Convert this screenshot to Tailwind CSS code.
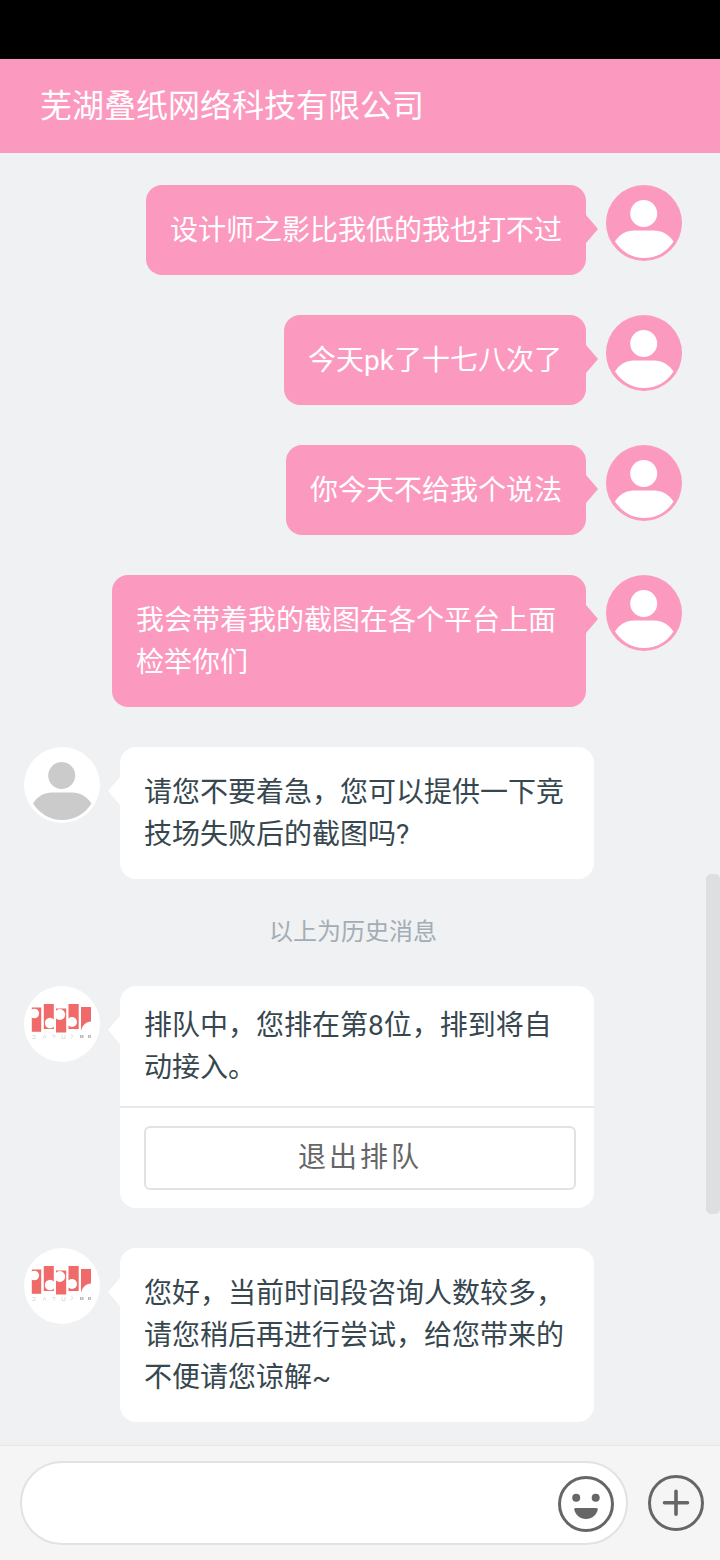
<!DOCTYPE html>
<html lang="zh-CN">
<head>
<meta charset="utf-8">
<title>芜湖叠纸网络科技有限公司</title>
<script src="https://cdn.jsdelivr.net/npm/@tailwindcss/browser@4"></script>
</head>
<body class="bg-[#eff1f3]">
<svg class="hidden">
  <symbol id="person" viewBox="0 0 76 76">
    <circle cx="37.700" cy="28.500" r="13.500"/>
    <path d="M9 56.500C14 49 20 45.500 28 45.500H48C56 45.500 62 49 67.500 56.500C60 68 50 73 38 73C26 73 16 67 9 56.500Z"/>
  </symbol>
  <symbol id="logo" viewBox="0 0 76 76">
    <g fill="#f06a6a">
      <rect x="7.800" y="21.500" width="9.400" height="24.300"/>
      <rect x="19.800" y="18" width="10" height="25"/>
      <rect x="32" y="22.500" width="10.200" height="24"/>
      <rect x="44.500" y="18" width="10.200" height="25"/>
      <path d="M57 21H67V35.500C62 36 58.500 39 57.500 43.800H57Z"/>
    </g>
    <g fill="#fff">
      <circle cx="10.300" cy="27.500" r="4.800"/>
      <circle cx="26" cy="37" r="5.200"/>
      <circle cx="35.800" cy="28.500" r="5.400"/>
      <circle cx="48" cy="36" r="5"/>
    </g>
    <g fill="none" stroke="#d8d8da" stroke-width=".8">
      <path d="M8.500 49.500H11V52.500H8M19 52.500L20.500 49.500L22 52.500M28 49.500H31L30 52.500M38 49V52.500M41 49V52.500H38M49 50L46.500 52.500M49 49H47"/>
      <path d="M56 50.500H59.500M64 50.500H67" stroke="#b5b5b8" stroke-width="3" stroke-dasharray="1.500 .6"/>
    </g>
  </symbol>
</svg>
<div class="relative flex h-[1560px] w-[720px] flex-col overflow-hidden bg-[#eff1f3] font-[Roboto,'Noto_Sans_CJK_SC',sans-serif] text-[28px] leading-[42px] text-[#37474f]">
  <div class="h-[59px] shrink-0 bg-black"></div>
  <header class="flex h-[94px] shrink-0 items-center bg-[#fc99be] px-10 text-[32px] text-white">芜湖叠纸网络科技有限公司</header>

  <main class="flex flex-1 flex-col gap-10 pt-8 pr-[38px] pl-6">
    <div class="flex items-start justify-end gap-5">
      <div class="relative rounded-2xl bg-[#fc99be] px-6 pt-[25px] pb-[23px] text-white">设计师之影比我低的我也打不过
        <svg class="absolute top-[30px] -right-3 h-[28px] w-[13px] fill-[#fc99be]" viewBox="0 0 13 28"><path d="M0 0H1L13 14L1 28H0Z"/></svg>
      </div>
      <svg class="size-[76px] rounded-full bg-[#fc99be] fill-white"><use href="#person"/></svg>
    </div>
    <div class="flex items-start justify-end gap-5">
      <div class="relative rounded-2xl bg-[#fc99be] px-6 pt-[25px] pb-[23px] text-white">今天pk了十七八次了
        <svg class="absolute top-[30px] -right-3 h-[28px] w-[13px] fill-[#fc99be]" viewBox="0 0 13 28"><path d="M0 0H1L13 14L1 28H0Z"/></svg>
      </div>
      <svg class="size-[76px] rounded-full bg-[#fc99be] fill-white"><use href="#person"/></svg>
    </div>
    <div class="flex items-start justify-end gap-5">
      <div class="relative rounded-2xl bg-[#fc99be] px-6 pt-[25px] pb-[23px] text-white">你今天不给我个说法
        <svg class="absolute top-[30px] -right-3 h-[28px] w-[13px] fill-[#fc99be]" viewBox="0 0 13 28"><path d="M0 0H1L13 14L1 28H0Z"/></svg>
      </div>
      <svg class="size-[76px] rounded-full bg-[#fc99be] fill-white"><use href="#person"/></svg>
    </div>
    <div class="flex items-start justify-end gap-5">
      <div class="relative w-[474px] rounded-2xl bg-[#fc99be] px-6 pt-[25px] pb-[23px] text-white">我会带着我的截图在各个平台上面<br>检举你们
        <svg class="absolute top-[30px] -right-3 h-[28px] w-[13px] fill-[#fc99be]" viewBox="0 0 13 28"><path d="M0 0H1L13 14L1 28H0Z"/></svg>
      </div>
      <svg class="size-[76px] rounded-full bg-[#fc99be] fill-white"><use href="#person"/></svg>
    </div>

    <div class="flex items-start gap-5">
      <svg class="size-[76px] rounded-full bg-white fill-[#cbcbcb]"><use href="#person"/></svg>
      <div class="relative w-[474px] rounded-2xl bg-white px-6 pt-[25px] pb-[23px]">请您不要着急，您可以提供一下竞<br>技场失败后的截图吗?
        <svg class="absolute top-[30px] -left-3 h-[28px] w-[13px] fill-white" viewBox="0 0 13 28"><path d="M13 0H12L0 14L12 28H13Z"/></svg>
      </div>
    </div>

    <div class="-mt-[5px] -mb-1 h-9 text-center text-2xl leading-9 text-[#a3adb5]">以上为历史消息</div>

    <div class="flex items-start gap-5">
      <svg class="size-[76px] rounded-full bg-white"><use href="#logo"/></svg>
      <div class="relative w-[474px] rounded-2xl bg-white">
        <div class="border-b-2 border-[#e8e8e8] px-6 pt-[19px] pb-[17px]">排队中，您排在第8位，排到将自<br>动接入。</div>
        <div class="pt-[18px] pr-[18px] pb-[18px] pl-6">
          <button class="block h-16 w-full rounded-md border-2 border-[#e2e2e2] text-center leading-[60px] tracking-[3px] text-[#666]">退出排队</button>
        </div>
        <svg class="absolute top-[30px] -left-3 h-[28px] w-[13px] fill-white" viewBox="0 0 13 28"><path d="M13 0H12L0 14L12 28H13Z"/></svg>
      </div>
    </div>

    <div class="flex items-start gap-5">
      <svg class="size-[76px] rounded-full bg-white"><use href="#logo"/></svg>
      <div class="relative w-[474px] rounded-2xl bg-white px-6 pt-[25px] pb-[23px]">您好，当前时间段咨询人数较多，<br>请您稍后再进行尝试，给您带来的<br>不便请您谅解~
        <svg class="absolute top-[30px] -left-3 h-[28px] w-[13px] fill-white" viewBox="0 0 13 28"><path d="M13 0H12L0 14L12 28H13Z"/></svg>
      </div>
    </div>
  </main>

  <footer class="flex h-[118px] shrink-0 items-start gap-5 border-t-[3px] border-[#efeff0] bg-[#f5f5f5] pt-4 pr-4 pl-5 shadow-[inset_0_1px_#e6e6e6]">
    <div class="flex h-[84px] w-[608px] items-center justify-end rounded-full border-2 border-[#e2e2e2] bg-white pr-3">
      <svg class="mt-0.5 size-14" viewBox="0 0 56 56" fill="#666">
        <circle cx="28" cy="28" r="26.500" fill="none" stroke="#666" stroke-width="3"/>
        <circle cx="18.200" cy="21.700" r="4"/><circle cx="37.700" cy="21.700" r="4"/>
        <path d="M17.500 32H38.500Q40 32 39.800 33.500C38.500 39 34 43 28 43S17.500 39 16.200 33.500Q16 32 17.500 32Z"/>
      </svg>
    </div>
    <svg class="mt-3.5 size-14 shrink-0" viewBox="0 0 56 56" fill="none" stroke="#666">
      <circle cx="28" cy="28" r="26.500" stroke-width="3"/>
      <path d="M16.500 27.700H39.500M28 16.200V39.200" stroke-width="3.600" stroke-linecap="round"/>
    </svg>
  </footer>
  <div class="absolute top-[874px] right-0 h-[340px] w-3.5 rounded-[5px] bg-[#dddfe1]"></div>
</div>
</body>
</html>
